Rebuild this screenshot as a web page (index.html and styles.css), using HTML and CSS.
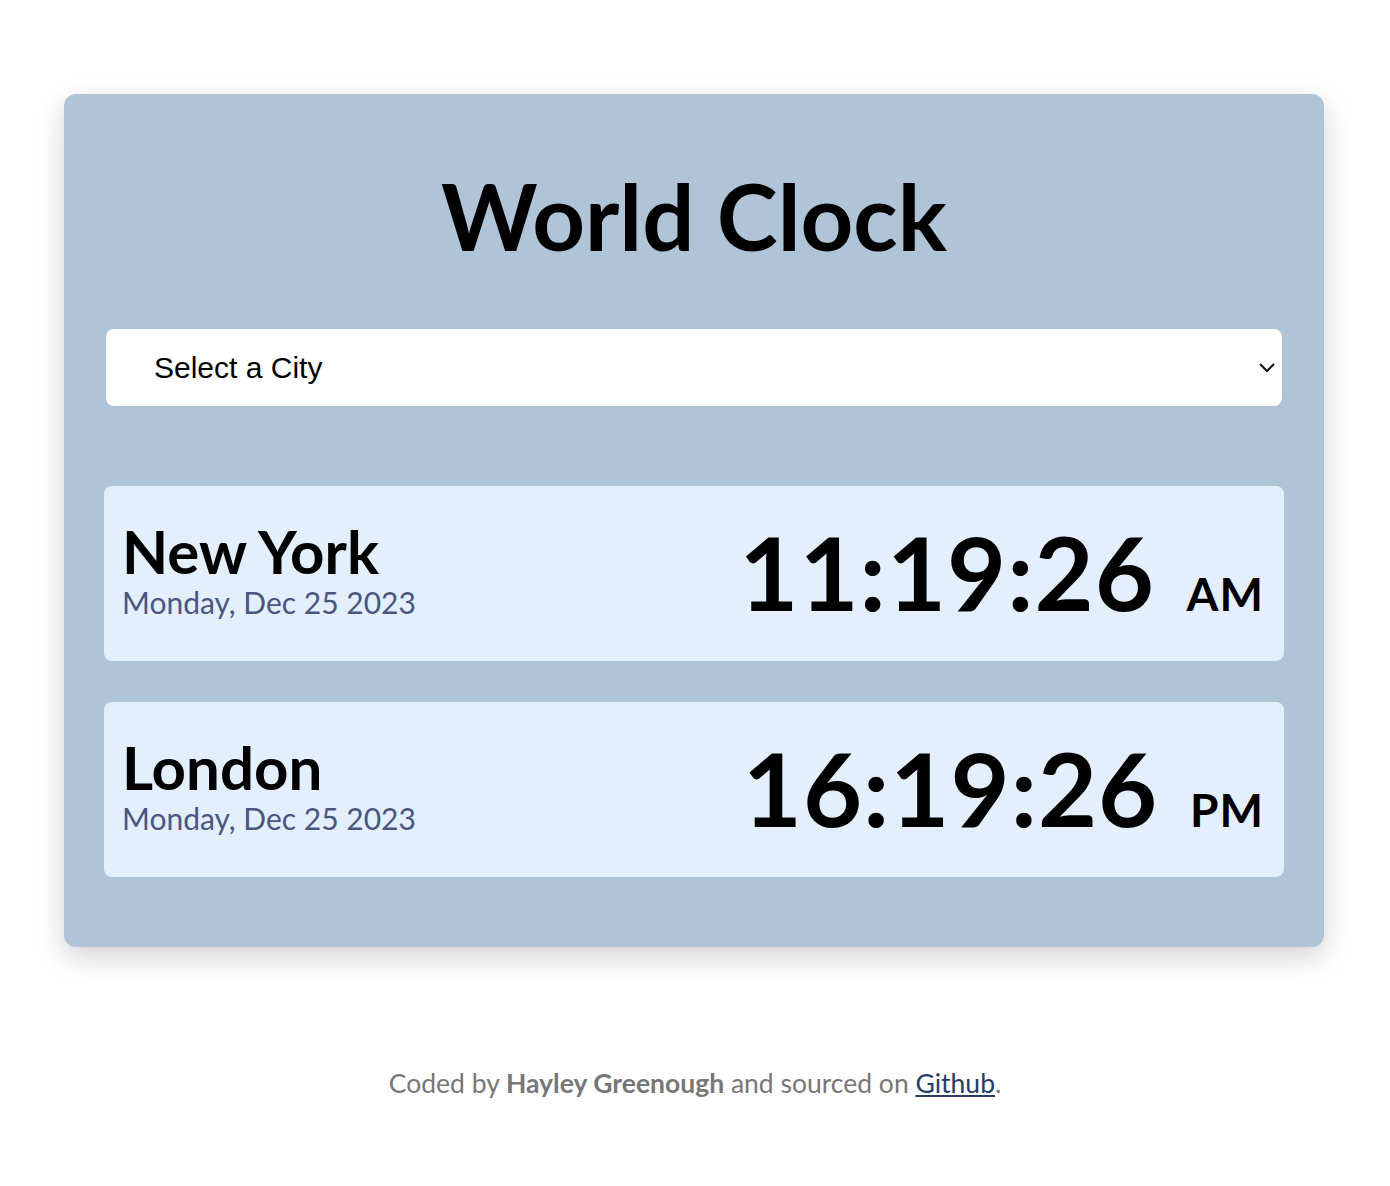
FILE: index.html
```html
<!DOCTYPE html>
<html lang="en">
<head>
<meta charset="utf-8">
<title>World Clock</title>
<link rel="stylesheet" href="styles.css">
</head>
<body>
<main class="container">
  <h1 class="title">World Clock</h1>
  <div class="select-wrap">
    <span class="select-label">Select a City</span>
    <svg class="chevron" width="18" height="11" viewBox="0 0 18 11"><path d="M2 2 L9 9 L16 2" fill="none" stroke="#111" stroke-width="2"/></svg>
  </div>
  <div class="cities">
    <div class="city">
      <div class="city-info">
        <div class="city-name">New York</div>
        <div class="city-date">Monday, Dec 25 2023</div>
      </div>
      <div class="city-time">11:19:26 <small>AM</small></div>
    </div>
    <div class="city">
      <div class="city-info">
        <div class="city-name">London</div>
        <div class="city-date">Monday, Dec 25 2023</div>
      </div>
      <div class="city-time">16:19:26 <small>PM</small></div>
    </div>
  </div>
</main>
<footer class="footer">Coded by <strong>Hayley Greenough</strong> and sourced on <a href="#">Github</a>.</footer>
</body>
</html>
```

FILE: styles.css
```css
html, body { margin: 0; padding: 0; background: #fff; }
body { font-family: "Lato", "DejaVu Sans", sans-serif; }
.container {
  width: 1180px;
  margin: 94px 0 0 64px;
  padding: 76px 40px 70px;
  background: #b0c4d8;
  border-radius: 12px;
  box-shadow: 0 10px 30px rgba(0,0,0,0.18);
}
.title {
  margin: 0;
  text-align: center;
  font-size: 92px;
  line-height: 1;
  font-weight: 700;
  color: #000;
}
.select-wrap {
  margin: 67px 2px 0;
  height: 77px;
  background: #fff;
  border-radius: 8px;
  display: flex;
  align-items: center;
  justify-content: space-between;
  padding: 0 6px 0 48px;
  font-family: "Liberation Sans", Arial, sans-serif;
  font-size: 30px;
  color: #000;
}
.chevron { display: block; }
.cities { margin-top: 80px; display: flex; flex-direction: column; gap: 41px; }
.city {
  height: 175px;
  box-sizing: border-box;
  background: #e3effd;
  border-radius: 8px;
  display: flex;
  align-items: center;
  justify-content: space-between;
  padding: 0 20px 0 18px;
}
.city-info { margin-top: -10px; }
.city-name { font-size: 60px; font-weight: 700; line-height: 1.1; color: #000; }
.city-date { font-size: 30px; color: #4b5680; line-height: 1.2; }
.city-time { font-size: 102px; font-weight: 700; line-height: 1; color: #000; letter-spacing: 1px; margin-top: -4px; }
.city-time small { font-size: 46px; margin-left: 6px; }
.footer {
  margin-top: 120px;
  text-align: center;
  font-size: 26.5px;
  color: #777;
}
.footer strong { font-weight: 700; }
.footer a { color: #253d66; }
```
